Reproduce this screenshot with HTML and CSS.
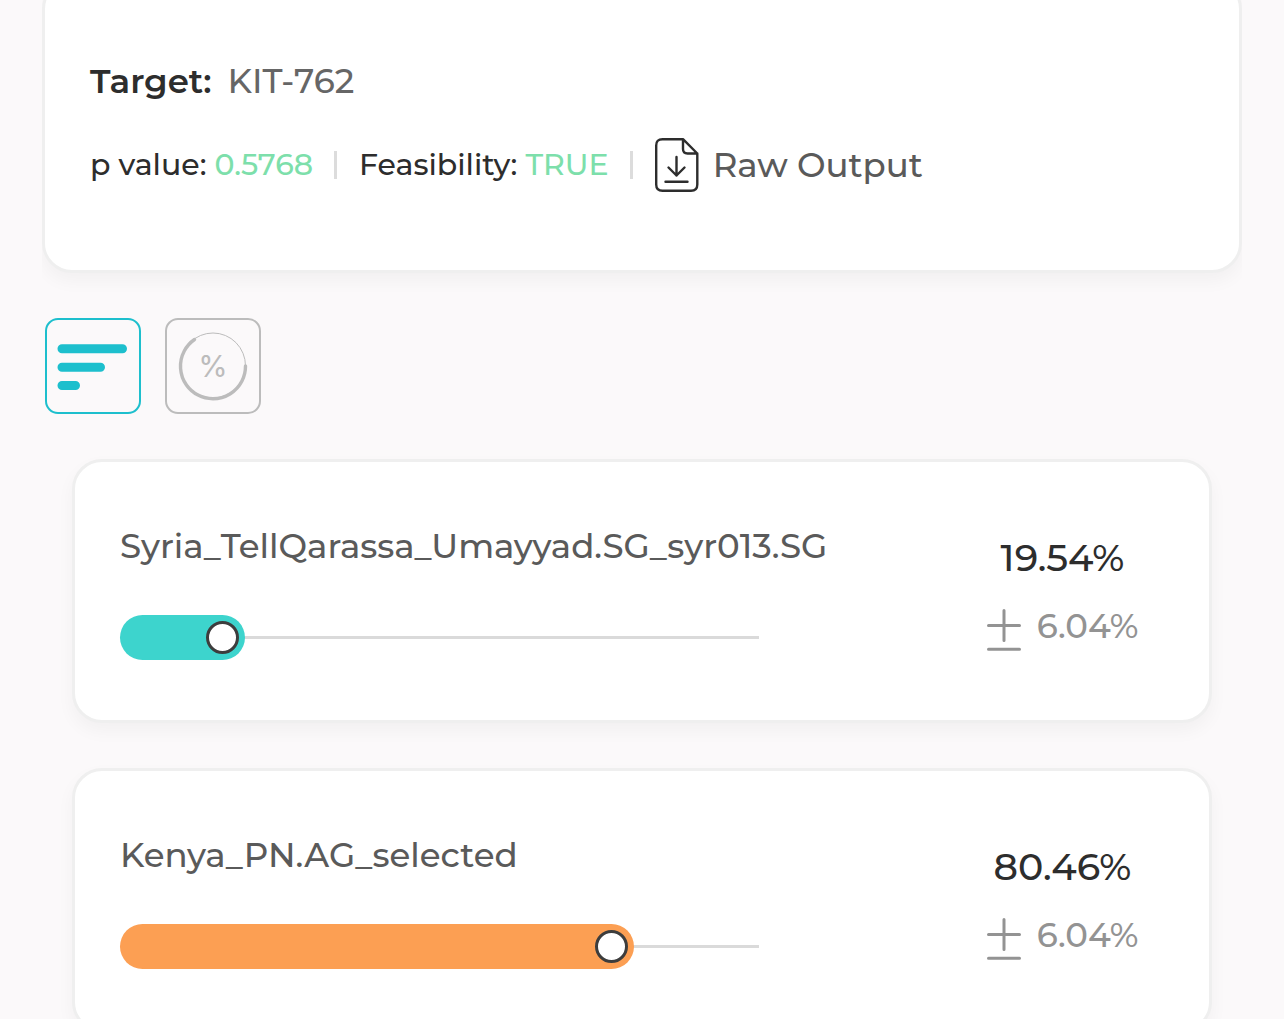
FILE: index.html
```html
<!DOCTYPE html>
<html lang="en">
<head>
    <meta charset="UTF-8">
    <meta name="viewport" content="width=device-width, initial-scale=1.0">
    <title>KIT-762</title>
    <link rel="stylesheet" href="styles.css">
</head>
<body>
    <main>
        <!-- Target summary -->
        <div class="summary">
            <section class="card summary-card">
                <h1 class="target"><strong>Target:</strong> <span>KIT-762</span></h1>
                <div class="stats">
                    <p class="stat">p value: <span class="good">0.5768</span></p>
                    <span class="divider"></span>
                    <p class="stat">Feasibility: <span class="good">TRUE</span></p>
                    <span class="divider"></span>
                    <a href="#" class="raw-output">
                        <svg width="44" height="54" viewBox="0 0 44 54" fill="none" stroke="#2d2d2d" stroke-width="2.4" stroke-linecap="round" stroke-linejoin="round">
                            <path d="M28 1.2H7.5Q1.2 1.2 1.2 7.5V46.5Q1.2 52.8 7.5 52.8H36Q42.3 52.8 42.3 46.5V15.5L28 1.2V11Q28 15.5 32.5 15.5H42.3"/>
                            <path d="M21.5 19V37.5M13.5 29.5L21.5 37.5L29.5 29.5M10.5 43.7H32.5"/>
                        </svg>
                        Raw Output
                    </a>
                </div>
            </section>
        </div>

        <!-- View switch -->
        <div class="views">
            <button type="button" class="view-btn active" aria-label="Bars">
                <svg width="92" height="92" viewBox="0 0 92 92" stroke="#1dbfcd" stroke-width="9" stroke-linecap="round">
                    <path d="M15 28.7H75.5M15 47.2H53.5M15 65.5H28.5"/>
                </svg>
            </button>
            <button type="button" class="view-btn" aria-label="Percent">
                <svg width="92" height="92" viewBox="0 0 92 92" fill="none" stroke="#bcbcbc" stroke-linecap="round">
                    <circle cx="46" cy="45.5" r="32.5" stroke-width="1"/>
                    <path d="M78.5 46A32.5 32.5 0 1 1 27.5 19.5" stroke-width="3.4"/>
                    <text class="view-percent" x="46" y="57" text-anchor="middle">%</text>
                </svg>
            </button>
        </div>

        <!-- Sources -->
        <div class="sources">
            <section class="card source">
                <div class="source-main">
                    <label class="source-name" for="source-1">Syria_TellQarassa_Umayyad.SG_syr013.SG</label>
                    <div class="slider">
                        <div class="slider-fill teal" style="width: 19.54%"></div>
                        <input type="range" id="source-1" min="0" max="100" step="0.01" value="19.54">
                    </div>
                </div>
                <div class="source-values">
                    <p class="percent">19.54%</p>
                    <p class="error">
                        <svg width="34" height="44" viewBox="0 0 34 44" stroke="#939393" stroke-width="3" stroke-linecap="round">
                            <path d="M1.5 17.5H32.5M17 2.5V32.5M1.5 41.3H32.5"/>
                        </svg>
                        6.04%
                    </p>
                </div>
            </section>

            <section class="card source">
                <div class="source-main">
                    <label class="source-name" for="source-2">Kenya_PN.AG_selected</label>
                    <div class="slider">
                        <div class="slider-fill orange" style="width: 80.46%"></div>
                        <input type="range" id="source-2" min="0" max="100" step="0.01" value="80.46">
                    </div>
                </div>
                <div class="source-values">
                    <p class="percent">80.46%</p>
                    <p class="error">
                        <svg width="34" height="44" viewBox="0 0 34 44" stroke="#939393" stroke-width="3" stroke-linecap="round">
                            <path d="M1.5 17.5H32.5M17 2.5V32.5M1.5 41.3H32.5"/>
                        </svg>
                        6.04%
                    </p>
                </div>
            </section>
        </div>
    </main>
</body>
</html>
```

FILE: styles.css
```css
* {
    box-sizing: border-box;
}

body {
    margin: 0;
    height: 100vh;
    overflow: hidden;
    background: #fbf9fa;
    color: #2d2d2d;
    font-family: Montserrat, Inter, sans-serif;
}

h1,
p {
    margin: 0;
    font-weight: 500;
}

main {
    margin-top: -21px;
    padding: 0 42px;
}

.card {
    background: #fff;
    border: 3px solid #efefef;
    border-radius: 30px;
    box-shadow: 0 8px 18px rgba(0, 0, 0, 0.04);
}

/* Target summary */
.summary {
    overflow: hidden;
    padding-bottom: 45px;
}

.summary-card {
    padding: 77px 45px 78px;
}

.target {
    display: flex;
    gap: 16px;
    font-size: 34px;
    line-height: 44px;
    color: #666;
}

.target strong {
    font-weight: 600;
    color: #2d2d2d;
}

.stats {
    display: flex;
    align-items: center;
    margin-top: 35px;
    height: 54px;
}

.stat {
    font-size: 30px;
    line-height: 40px;
}

.good {
    color: #7ddfab;
}

.divider {
    width: 3px;
    height: 28px;
    margin: 0 22px 0 21px;
    background: #dcdcdc;
}

.raw-output {
    display: flex;
    align-items: center;
    gap: 14px;
    font-size: 34px;
    font-weight: 500;
    line-height: 44px;
    color: #5a5a5a;
    text-decoration: none;
}

/* View switch */
.views {
    display: flex;
    gap: 24px;
    padding: 0 3px;
}

.view-btn {
    width: 96px;
    height: 96px;
    padding: 0;
    border: 2px solid #bcbcbc;
    border-radius: 13px;
    background: none;
    cursor: pointer;
}

.view-btn.active {
    border-color: #1dbfcd;
}

.view-btn svg {
    display: block;
}

.view-percent {
    fill: #bcbcbc;
    stroke: none;
    font-family: Inter, sans-serif;
    font-size: 30px;
}

/* Sources */
.sources {
    display: flex;
    flex-direction: column;
    gap: 45px;
    padding: 45px 30px;
}

.source {
    display: flex;
    padding: 62px 45px 60px;
}

.source-main {
    flex: 1;
}

.source-name {
    display: block;
    margin-bottom: 47px;
    font-size: 34px;
    font-weight: 500;
    line-height: 44px;
    color: #5a5a5a;
}

.slider {
    position: relative;
    width: 76%;
    height: 45px;
    background: linear-gradient(#dadada, #dadada) center / 100% 3px no-repeat;
}

.slider-fill {
    height: 100%;
    border-radius: 23px;
}

.teal {
    background: #3dd4cd;
}

.orange {
    background: #fc9f53;
}

/* The knob sits 6px inside the end of the fill */
.slider input {
    position: absolute;
    top: 0;
    left: -39px;
    width: calc(100% + 33px);
    height: 45px;
    margin: 0;
    background: none;
    appearance: none;
    -webkit-appearance: none;
    cursor: pointer;
}

.slider input::-webkit-slider-thumb {
    -webkit-appearance: none;
    box-sizing: border-box;
    width: 33px;
    height: 33px;
    border: 3px solid #3d3d3d;
    border-radius: 50%;
    background: #fff;
}

.source-values {
    display: flex;
    flex-direction: column;
    align-items: center;
    width: 203px;
    padding-top: 10px;
}

.percent {
    font-size: 38px;
    line-height: 48px;
}

.error {
    display: flex;
    gap: 16px;
    margin-top: 26px;
    font-size: 34px;
    line-height: 36px;
    color: #939393;
}
```
